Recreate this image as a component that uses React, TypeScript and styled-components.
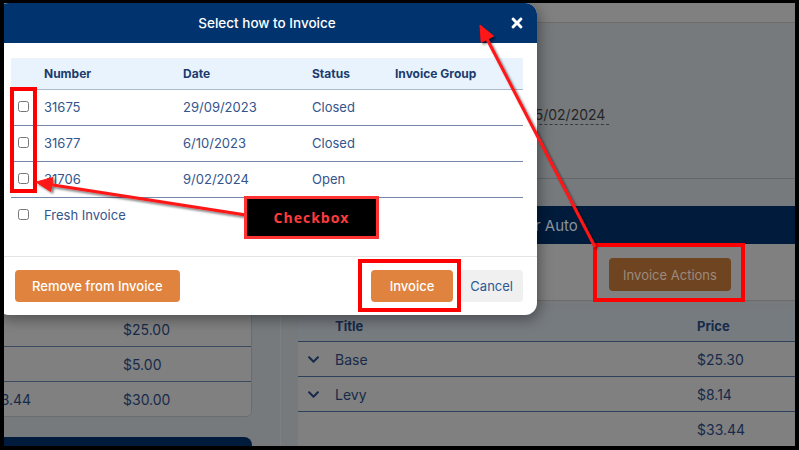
import { Fragment } from 'react'
import styled, { createGlobalStyle } from 'styled-components'
import { FaTimes, FaChevronDown } from 'react-icons/fa'

const GlobalStyle = createGlobalStyle`
  html, body {
    margin: 0;
    padding: 0;
    background: #000;
  }
  body {
    font-family: Inter, "Liberation Sans", sans-serif;
  }
  * {
    box-sizing: border-box;
  }
`

const navy = '#01346f'
const orange = '#e0833f'

/* the page behind the modal is shown dimmed, so its colours are the shaded ones */
const dim = {
  white: '#808080',
  panel: '#767a7d',
  navy: '#001b3b',
  head: '#767b80',
  text: '#172a4a',
  line: '#2f405c',
  border: '#6a6d70',
}

const Frame = styled.div`
  position: relative;
  width: 799px;
  height: 450px;
  padding: 3px 4px 4px 4px;
  background: #000;
  overflow: hidden;
`

const Viewport = styled.div`
  position: relative;
  width: 100%;
  height: 100%;
  overflow: hidden;
  display: flex;
  flex-direction: column;
  background: ${dim.panel};
`

const TopBar = styled.div`
  height: 20px;
  flex-shrink: 0;
  background: ${dim.white};
  border-bottom: 1px solid #6c6c6c;
`

const Main = styled.div`
  flex: 1;
  display: flex;
  min-height: 0;
`

/* left column: summary + price cards */
const LeftCol = styled.div`
  width: 313px;
  margin-left: -36px;
  flex-shrink: 0;
  padding: 16px 28px 0 0;
  border-right: 1px solid #7d8185;
  display: flex;
  flex-direction: column;
  gap: 20px;
`

const Card = styled.div<{ $h?: number }>`
  flex-shrink: 0;
  background: ${dim.white};
  border: 1px solid ${dim.border};
  border-radius: 6px;
  overflow: hidden;
  ${(p) => (p.$h ? `height: ${p.$h}px;` : '')}
`

const CardTitle = styled.div`
  height: 40px;
  background: ${dim.navy};
  color: ${dim.white};
  font-size: 15px;
  display: flex;
  align-items: center;
  padding-left: 50px;
`

const PriceGrid = styled.div`
  display: grid;
  grid-template-columns: 140px 1fr;
`

const PriceCell = styled.div<{ $head?: boolean; $last?: boolean }>`
  height: ${(p) => (p.$head ? 36 : p.$last ? 34 : 35)}px;
  display: flex;
  align-items: center;
  padding-left: 14px;
  font-size: 14px;
  color: ${dim.text};
  font-weight: ${(p) => (p.$head ? 700 : 400)};
  background: ${(p) => (p.$head ? dim.head : dim.white)};
  border-bottom: ${(p) => (p.$last ? 'none' : `1px solid #3b4a62`)};
`

const NavyCard = styled.div`
  height: 60px;
  flex-shrink: 0;
  background: ${dim.navy};
  border-radius: 8px;
`

/* right column */
const RightCol = styled.div`
  flex: 1;
  min-width: 0;
  padding-left: 17px;
  display: flex;
  flex-direction: column;
`

const Details = styled.div`
  height: 156px;
  flex-shrink: 0;
  padding-top: 7px;
  border-bottom: 1px solid #63676a;
  margin-left: -17px;
  padding-left: 17px;
`

const FieldRow = styled.div`
  height: 34px;
  display: grid;
  grid-template-columns: 231px auto;
  align-items: center;
  justify-content: start;
  font-size: 14px;
  color: #262626;
`

const FieldValue = styled.span<{ $dashed?: boolean }>`
  line-height: 18px;
  padding-right: 4px;
  border-bottom: 1px ${(p) => (p.$dashed ? 'dashed #3a3a3a' : 'solid transparent')};
`

const SectionBar = styled.div`
  margin-top: 27px;
  height: 38px;
  flex-shrink: 0;
  background: ${dim.navy};
  color: #8c939c;
  font-size: 15px;
  display: flex;
  align-items: center;
  padding-left: 126px;
`

const ActionsRow = styled.div`
  height: 57px;
  flex-shrink: 0;
  background: ${dim.white};
  border-bottom: 1px solid #6b6b6b;
  display: flex;
  justify-content: flex-end;
  align-items: flex-start;
  padding: 14px 64px 0 0;
`

const ActionButton = styled.button`
  height: 33px;
  width: 122px;
  border: none;
  border-radius: 4px;
  background: #6f4421;
  color: #9a8b7e;
  font-family: inherit;
  font-size: 13px;
`

const LinesGrid = styled.div`
  margin-top: 9px;
  display: grid;
  grid-template-columns: 30px 362px 1fr;
`

const LineCell = styled.div<{ $head?: boolean }>`
  height: ${(p) => (p.$head ? 32 : 35)}px;
  display: flex;
  align-items: center;
  padding-left: 7px;
  font-size: ${(p) => (p.$head ? 13 : 14)}px;
  font-weight: ${(p) => (p.$head ? 700 : 400)};
  color: ${dim.text};
  background: ${(p) => (p.$head ? dim.head : dim.white)};
  border-bottom: 1px solid ${dim.line};
`

const ChevronCell = styled(LineCell)`
  padding-left: 9px;
`

/* modal */
const Modal = styled.div`
  position: absolute;
  left: -7px;
  top: 0;
  width: 540px;
  background: #fff;
  border-radius: 12px;
  overflow: hidden;
  box-shadow: 2px 4px 14px rgba(0, 0, 0, 0.4);
`

const ModalHeader = styled.div`
  position: relative;
  height: 40px;
  background: ${navy};
  color: #fff;
  display: flex;
  align-items: center;
  justify-content: center;
  font-size: 13.5px;
  font-weight: 500;
`

const CloseButton = styled.span`
  position: absolute;
  right: 12px;
  top: 12px;
  display: flex;
  color: #fff;
`

const ModalBody = styled.div`
  padding: 15px 14px 23px;
`

const InvoiceGrid = styled.div`
  display: grid;
  grid-template-columns: 26px 139px 129px 83px 1fr;
`

const HeadCell = styled.div`
  height: 32px;
  display: flex;
  align-items: center;
  padding-left: 7px;
  background: #e8f3fd;
  border-bottom: 1px solid #a9b8cf;
  font-size: 12px;
  font-weight: 700;
  color: #1d3b6e;
`

const Cell = styled.div<{ $last?: boolean }>`
  height: ${(p) => (p.$last ? 35 : 36)}px;
  display: flex;
  align-items: center;
  padding: 0 0 2px 7px;
  font-size: 13px;
  color: #34548c;
  border-bottom: ${(p) => (p.$last ? 'none' : '1px solid #7486a9')};
`

const Check = styled.span`
  width: 11px;
  height: 11px;
  border: 1px solid #767676;
  border-radius: 2.5px;
  background: #fff;
`

const ModalFooter = styled.div`
  border-top: 1px solid #e4e4e4;
  padding: 13px 14px 13px 18px;
  display: flex;
  justify-content: space-between;
`

const ButtonGroup = styled.div`
  display: flex;
  gap: 7px;
`

const Button = styled.button<{ $variant?: 'primary' | 'plain' | 'wide' }>`
  height: 32px;
  border: none;
  border-radius: 4px;
  font-family: inherit;
  font-size: 13px;
  font-weight: ${(p) => (p.$variant === 'plain' ? 400 : 500)};
  padding: ${(p) => (p.$variant === 'plain' ? '0 10px' : p.$variant === 'wide' ? '0 17px' : '0 19px')};
  background: ${(p) => (p.$variant === 'plain' ? '#f0f0f0' : orange)};
  color: ${(p) => (p.$variant === 'plain' ? '#2c5a96' : '#fff')};
`

/* annotation layer */
const Annotations = styled.svg`
  position: absolute;
  top: 0;
  left: 0;
  pointer-events: none;
`

const Callout = styled.div`
  position: absolute;
  left: 244px;
  top: 196px;
  width: 135px;
  height: 43px;
  border: 3px solid #ff3333;
  background: #000;
  color: #ff3b3b;
  display: flex;
  align-items: center;
  justify-content: center;
  font-family: "Open Sans", "DejaVu Sans", sans-serif;
  font-weight: 700;
  font-size: 14px;
  letter-spacing: 1px;
`

const invoices = [
  { number: '31675', date: '29/09/2023', status: 'Closed' },
  { number: '31677', date: '6/10/2023', status: 'Closed' },
  { number: '31706', date: '9/02/2024', status: 'Open' },
]

const priceRows = [
  ['', '$8.00'],
  ['', '$25.00'],
  ['', '$5.00'],
  ['$33.44', '$30.00'],
]

const lines = [
  { title: 'Base', price: '$25.30', expand: true },
  { title: 'Levy', price: '$8.14', expand: true },
  { title: '', price: '$33.44', expand: false },
]

export default function App() {
  return (
    <Frame>
      <GlobalStyle />
      <Viewport>
        <TopBar />
        <Main>
          <LeftCol>
            <Card $h={141} />
            <Card>
              <CardTitle>Pricing</CardTitle>
              <PriceGrid>
                <PriceCell $head>Quoted</PriceCell>
                <PriceCell $head>Charged</PriceCell>
                {priceRows.map((r, i) => (
                  <Fragment key={i}>
                    <PriceCell $last={i === priceRows.length - 1}>{r[0]}</PriceCell>
                    <PriceCell $last={i === priceRows.length - 1}>{r[1]}</PriceCell>
                  </Fragment>
                ))}
              </PriceGrid>
            </Card>
            <NavyCard />
          </LeftCol>
          <RightCol>
            <Details>
              <FieldRow>
                <span>Customer</span>
              </FieldRow>
              <FieldRow>
                <span>Reference</span>
              </FieldRow>
              <FieldRow>
                <span>Due Date</span>
                <FieldValue $dashed>15/02/2024</FieldValue>
              </FieldRow>
            </Details>
            <SectionBar>Invoice Lines for Auto</SectionBar>
            <ActionsRow>
              <ActionButton>Invoice Actions</ActionButton>
            </ActionsRow>
            <LinesGrid>
              <LineCell $head />
              <LineCell $head>Title</LineCell>
              <LineCell $head>Price</LineCell>
              {lines.map((l, i) => (
                <Fragment key={i}>
                  <ChevronCell>{l.expand && <FaChevronDown size={13} />}</ChevronCell>
                  <LineCell>{l.title}</LineCell>
                  <LineCell>{l.price}</LineCell>
                </Fragment>
              ))}
            </LinesGrid>
          </RightCol>
        </Main>

        <Modal>
          <ModalHeader>
            Select how to Invoice
            <CloseButton>
              <FaTimes size={16} />
            </CloseButton>
          </ModalHeader>
          <ModalBody>
            <InvoiceGrid>
              <HeadCell />
              <HeadCell>Number</HeadCell>
              <HeadCell>Date</HeadCell>
              <HeadCell>Status</HeadCell>
              <HeadCell>Invoice Group</HeadCell>
              {invoices.map((inv) => (
                <Fragment key={inv.number}>
                  <Cell><Check /></Cell>
                  <Cell>{inv.number}</Cell>
                  <Cell>{inv.date}</Cell>
                  <Cell>{inv.status}</Cell>
                  <Cell />
                </Fragment>
              ))}
              <Cell $last><Check /></Cell>
              <Cell $last>Fresh Invoice</Cell>
              <Cell $last />
              <Cell $last />
              <Cell $last />
            </InvoiceGrid>
          </ModalBody>
          <ModalFooter>
            <Button $variant="wide">Remove from Invoice</Button>
            <ButtonGroup>
              <Button>Invoice</Button>
              <Button $variant="plain">Cancel</Button>
            </ButtonGroup>
          </ModalFooter>
        </Modal>
      </Viewport>

      <Annotations width={799} height={450} viewBox="0 0 799 450">
        <defs>
          <filter id="shade" x="-20%" y="-20%" width="140%" height="140%">
            <feDropShadow dx="2" dy="2" stdDeviation="1.2" floodColor="#000" floodOpacity="0.5" />
          </filter>
        </defs>
        <g fill="none" stroke="#ff0000" strokeWidth={4}>
          <rect x={12} y={89} width={23} height={102} />
          <rect x={360} y={261} width={99} height={49} />
          <rect x={595} y={245} width={148} height={55} />
        </g>
        <g filter="url(#shade)" fill="#ff1414" stroke="#ff1414">
          <line x1={246} y1={215} x2={50} y2={184.5} strokeWidth={3} />
          <polygon points="36,182 53,177.6 50.7,191.4" strokeWidth={1} />
          <line x1={595} y1={247} x2={487} y2={39} strokeWidth={3} />
          <polygon points="480,25 493.6,36 481.2,42.4" strokeWidth={1} />
        </g>
      </Annotations>
      <Callout>Checkbox</Callout>
    </Frame>
  )
}
